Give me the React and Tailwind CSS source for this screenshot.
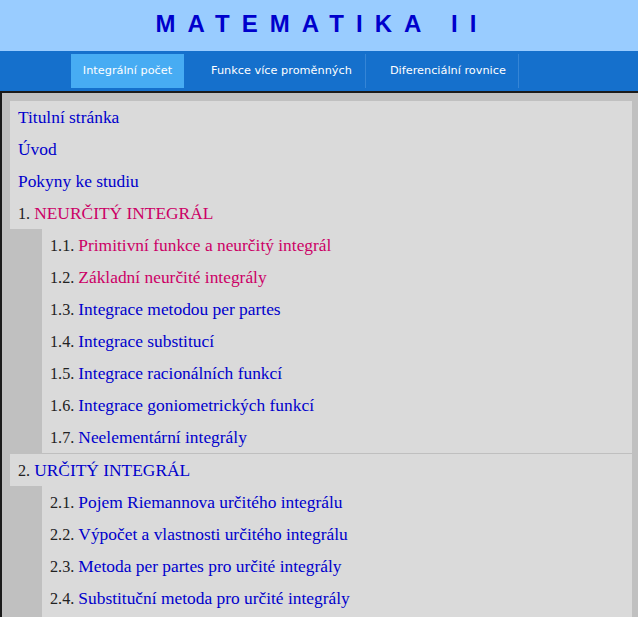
import React from "react";

const serif = { fontFamily: '"Liberation Serif", "Times New Roman", serif' };

function Row({ num, label, active }) {
  return (
    <div className="h-[32px] leading-[32px] text-[17.4px] pl-[8px] bg-[#dadada] whitespace-nowrap">
      {num && <span className="text-[#222222] text-[16.2px]">{num} </span>}
      {label && <span className={active ? "text-[#cc0066]" : "text-[#0000cc]"}>{label}</span>}
    </div>
  );
}

export default function App() {
  const sub1 = [
    ["1.1.", "Primitivní funkce a neurčitý integrál", true],
    ["1.2.", "Základní neurčité integrály", true],
    ["1.3.", "Integrace metodou per partes"],
    ["1.4.", "Integrace substitucí"],
    ["1.5.", "Integrace racionálních funkcí"],
    ["1.6.", "Integrace goniometrických funkcí"],
    ["1.7.", "Neelementární integrály"],
  ];
  const sub2 = [
    ["2.1.", "Pojem Riemannova určitého integrálu"],
    ["2.2.", "Výpočet a vlastnosti určitého integrálu"],
    ["2.3.", "Metoda per partes pro určité integrály"],
    ["2.4.", "Substituční metoda pro určité integrály"],
  ];
  return (
    <div className="w-[638px] h-[617px] overflow-hidden bg-[#c0c0c0]">
      <div className="h-[51px] bg-[#99ccff] flex items-center justify-center">
        <h1
          className="text-[24px] font-bold text-[#0000cc] tracking-[12px] pl-[6px] leading-none -mt-[3px]"
          style={{ fontFamily: '"Liberation Sans", Arial, sans-serif' }}
        >
          MATEMATIKA II
        </h1>
      </div>
      <div
        className="h-[40px] bg-[#1570cc] flex items-center pl-[71px] text-[11.3px] text-white"
        style={{ fontFamily: '"DejaVu Sans", Verdana, sans-serif' }}
      >
        <div className="h-[34px] w-[113px] bg-[#47acf3] flex items-center justify-center">Integrální počet</div>
        <div className="h-[34px] pl-[27px] pr-[13px] border-r border-[#3585d6] flex items-center">Funkce více proměnných</div>
        <div className="h-[34px] pl-[24px] pr-[12px] border-r border-[#3585d6] flex items-center">Diferenciální rovnice</div>
      </div>
      <div className="border-t-2 border-l-2 border-[#1a1a1a] pt-[8px] pl-[8px] pr-[6px] h-[526px]" style={serif}>
        <Row label="Titulní stránka" />
        <Row label="Úvod" />
        <Row label="Pokyny ke studiu" />
        <Row num="1." label="NEURČITÝ INTEGRÁL" active />
        <div className="ml-[32px] border-b border-[#bfbfbf]">
          {sub1.map(([n, l, a]) => (
            <Row key={n} num={n} label={l} active={a} />
          ))}
        </div>
        <Row num="2." label="URČITÝ INTEGRÁL" />
        <div className="ml-[32px]">
          {sub2.map(([n, l]) => (
            <Row key={n} num={n} label={l} />
          ))}
          <Row />
        </div>
      </div>
    </div>
  );
}
